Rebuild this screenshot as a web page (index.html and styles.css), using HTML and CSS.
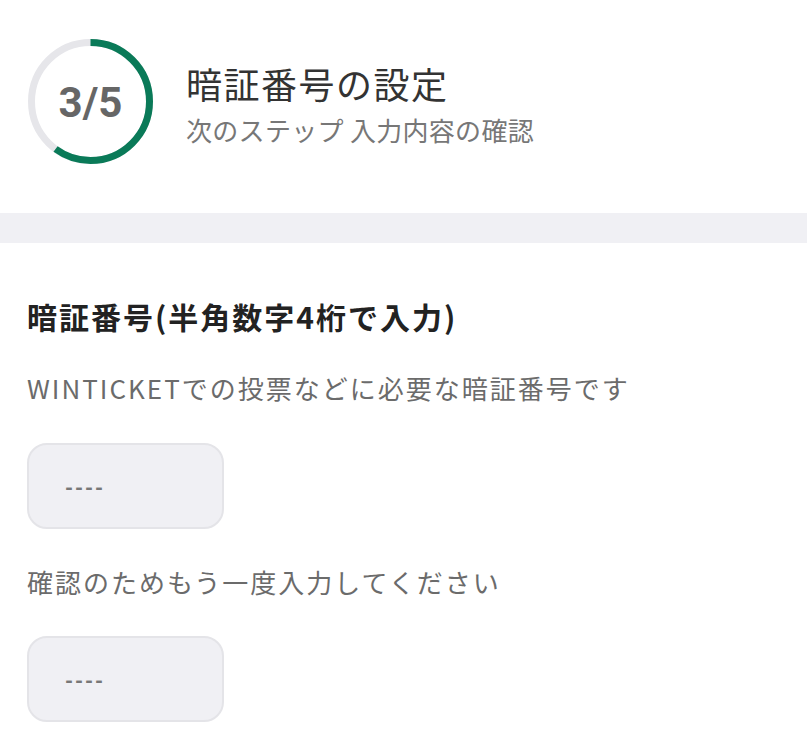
FILE: index.html
```html
<!DOCTYPE html>
<html lang="ja">
<head>
<meta charset="utf-8">
<title>暗証番号の設定</title>
<link rel="stylesheet" href="styles.css">
</head>
<body>
<header class="step-header">
  <div class="progress">
    <svg class="progress-ring" width="125" height="125" viewBox="0 0 125 125">
      <circle class="ring-track" cx="62.5" cy="62.5" r="59"></circle>
      <circle class="ring-fill" cx="62.5" cy="62.5" r="59" stroke-dasharray="222.4 370.7"></circle>
    </svg>
    <span class="progress-label">3/5</span>
  </div>
  <div class="step-text">
    <h1 class="step-title">暗証番号の設定</h1>
    <p class="step-next">次のステップ 入力内容の確認</p>
  </div>
</header>
<div class="divider"></div>
<main class="form">
  <h2 class="form-heading">暗証番号(半角数字4桁で入力)</h2>
  <p class="form-text">WINTICKETでの投票などに必要な暗証番号です</p>
  <div class="pin-box"><span class="pin-placeholder">----</span></div>
  <p class="form-text form-text-confirm">確認のためもう一度入力してください</p>
  <div class="pin-box pin-box-confirm"><span class="pin-placeholder">----</span></div>
</main>
</body>
</html>
```
FILE: styles.css
```css
html, body {
  margin: 0;
  padding: 0;
  background: #ffffff;
}
body {
  font-family: "Noto Sans CJK JP", "Noto Sans", sans-serif;
  color: #333;
}
.step-header {
  height: 213px;
  box-sizing: border-box;
  padding: 39px 0 0 28px;
  display: flex;
  align-items: flex-start;
}
.progress {
  position: relative;
  width: 125px;
  height: 125px;
  flex: none;
}
.progress-ring {
  display: block;
  transform: rotate(-90deg);
}
.ring-track {
  fill: none;
  stroke: #e6e6ea;
  stroke-width: 7;
}
.ring-fill {
  fill: none;
  stroke: #0a7a58;
  stroke-width: 7;
}
.progress-label {
  position: absolute;
  inset: 0;
  display: flex;
  align-items: center;
  justify-content: center;
  font-family: Roboto, "Liberation Sans", sans-serif;
  font-weight: 700;
  font-size: 42px;
  color: #666;
  padding-top: 1px;
}
.step-text {
  margin-left: 33px;
  padding-top: 19px;
}
.step-title {
  margin: 0;
  font-size: 36px;
  line-height: 50px;
  font-weight: 400;
  color: #333;
  letter-spacing: 1.5px;
}
.step-next {
  margin: 4px 0 0;
  font-size: 26px;
  line-height: 36px;
  color: #777;
  letter-spacing: 0.3px;
}
.divider {
  height: 30px;
  background: #f0f0f4;
}
.form {
  padding: 52px 0 0 27px;
}
.form-heading {
  margin: 0;
  font-size: 30px;
  line-height: 42px;
  font-weight: 700;
  color: #222;
  letter-spacing: 2px;
}
.form-text {
  margin: 33px 0 0;
  font-size: 26px;
  line-height: 36px;
  color: #6b6b6b;
  letter-spacing: 2px;
}
.form-text-confirm {
  margin-top: 35px;
}
.pin-box {
  margin-top: 37px;
  width: 197px;
  height: 86px;
  box-sizing: border-box;
  border: 2px solid #e4e4e8;
  border-radius: 20px;
  background: #f0f0f4;
  display: flex;
  align-items: center;
  padding-left: 34px;
}
.pin-box-confirm {
  margin-top: 36px;
}
.pin-placeholder {
  font-family: "Liberation Mono", monospace;
  font-size: 20px;
  font-weight: 700;
  color: #777;
  letter-spacing: -2px;
  padding-top: 4px;
}
```
